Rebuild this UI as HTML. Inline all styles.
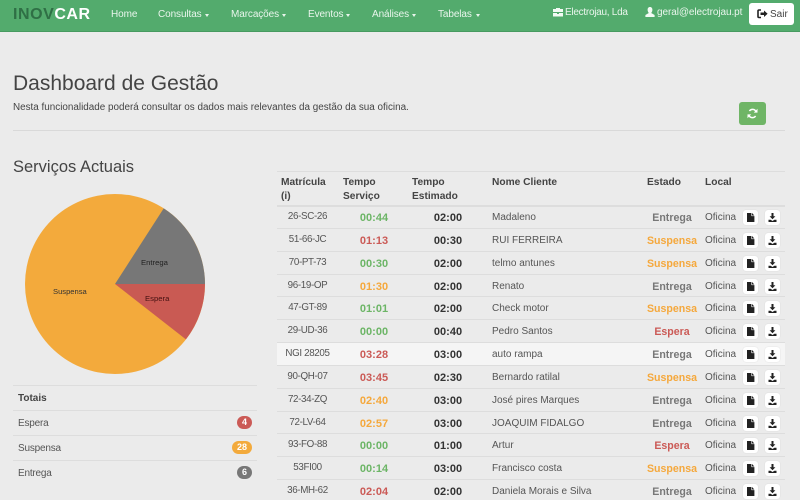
<!DOCTYPE html>
<html><head><meta charset="utf-8"><title>Dashboard de Gestão</title>
<style>
html,body{margin:0;padding:0;width:800px;height:500px;overflow:hidden;background:#ebebeb;font-family:"Liberation Sans",sans-serif;color:#555}
div,span,svg{position:absolute;white-space:nowrap}
b{font-weight:bold}
#w{left:0;top:0;width:800px;height:500px;overflow:hidden;background:#ebebeb}
#nav{left:0;top:0;width:800px;height:31px;background:#53ab6d;border-bottom:1px solid #479a60}
.n{top:8px;line-height:14px;font-size:10px;color:#e9f5ec;letter-spacing:-.1px}
.c{top:14px;width:0;height:0;border-left:2.5px solid transparent;border-right:2.5px solid transparent;border-top:3px solid #e9f5ec}
.h{font-size:10.2px;font-weight:bold;color:#444;line-height:14px}
.r{left:277px;width:508px;height:22px;border-top:1px solid #ddd}
.r span{top:5px;line-height:14px;font-size:10px;color:#555}
.r .m{left:0;width:61px;text-align:center;font-size:9.8px;letter-spacing:-.35px;top:4px}
.r .t{left:77px;width:40px;text-align:center;font-size:11px;font-weight:bold;top:5px}
.r .e{left:151px;width:40px;text-align:center;font-size:11px;font-weight:bold;color:#333;top:5px}
.r .p{left:215px}
.r .s{left:360px;width:70px;text-align:center;font-size:10.6px;font-weight:bold;top:5px}
.r .o{left:428px}
.r i{position:absolute;top:4px;width:15px;height:15px;background:#fff;border-radius:3px;box-shadow:0 0 1px #ccc}
.r i svg{left:3px;top:3px;width:9px;height:9px}
.a{left:466px}.b{left:488px}
.G{color:#6cb566!important}.R{color:#cb5a56!important}.O{color:#f5a83c!important}.Y{color:#777!important}
.l{left:13px;width:244px;height:1px;background:#ddd}
.tt{left:18px;font-size:10px;letter-spacing:-.2px;line-height:14px;color:#555}
.bd{height:13px;border-radius:7px;color:#fff;font-size:9px;font-weight:bold;line-height:13px;text-align:center}
</style></head><body>
<svg width="0" height="0" style="left:0;top:0">
<symbol id="f" viewBox="0 0 9 9"><path d="M1 0H5.4V3.1H8.4V9H1Z M6 0L8.4 2.5H6Z" fill="#222"/></symbol>
<symbol id="d" viewBox="0 0 9 9"><path d="M3.5 0H5.5V3.2H7.4L4.5 6.2 1.6 3.2H3.5Z M.5 6.8H2.6L4.5 8 6.4 6.8H8.5V9H.5Z" fill="#222"/></symbol>
</svg>
<div id="w">
<div id="nav"></div>
<div style="left:13px;top:5px;font-size:16px;line-height:20px;font-weight:bold;letter-spacing:.55px;color:#2f6f45">INOV<span style="position:static;color:#fff">CAR</span></div>
<div class="n" style="left:111px">Home</div>
<div class="n" style="left:158px">Consultas</div><div class="c" style="left:205px"></div>
<div class="n" style="left:231px">Marcações</div><div class="c" style="left:282px"></div>
<div class="n" style="left:308px">Eventos</div><div class="c" style="left:346px"></div>
<div class="n" style="left:372px">Análises</div><div class="c" style="left:412px"></div>
<div class="n" style="left:438px">Tabelas</div><div class="c" style="left:476px"></div>
<svg style="left:553px;top:7px" width="10" height="10" viewBox="0 0 10 10"><path d="M3 2V1H7V2H10V5H0V2Z M0 6H4V7H6V6H10V9.5H0Z" fill="#f2faf4"/></svg>
<div class="n" style="left:565px;top:6px;letter-spacing:-.27px">Electrojau, Lda</div>
<svg style="left:645px;top:7px" width="10" height="11" viewBox="0 0 10 11"><path d="M5 0C6.6 0 7.4 1.2 7.4 2.8 7.4 4.2 6.8 5.4 6.2 6L9.6 8V10H.4V8L3.8 6C3.2 5.4 2.6 4.2 2.6 2.8 2.6 1.2 3.4 0 5 0Z" fill="#f2faf4"/></svg>
<div class="n" style="left:657px;top:6px;letter-spacing:-.08px">geral@electrojau.pt</div>
<div style="left:749px;top:3px;width:45px;height:22px;background:#fff;border-radius:3px"></div>
<svg style="left:757px;top:9px" width="11" height="10" viewBox="0 0 11 10"><path d="M4 1H2A1 1 0 0 0 1 2V7.5A1 1 0 0 0 2 8.5H4" fill="none" stroke="#222" stroke-width="1.6"/><path d="M3.5 3.5H7V1.5L10.6 4.8 7 8V6H3.5Z" fill="#222"/></svg>
<div class="n" style="left:770px;top:8px;color:#444;letter-spacing:0">Sair</div>

<div style="left:13px;top:71px;font-size:21px;line-height:26px;color:#444">Dashboard de Gestão</div>
<div style="left:13px;top:101px;font-size:9.9px;line-height:14px;color:#444">Nesta funcionalidade poderá consultar os dados mais relevantes da gestão da sua oficina.</div>
<div style="left:739px;top:102px;width:27px;height:23px;background:#6fb566;border-radius:3px"></div>
<svg style="left:747px;top:108px" width="11" height="11" viewBox="0 0 11 11"><path d="M9 3.6A3.8 3.8 0 0 0 2.4 3M2 7.4A3.8 3.8 0 0 0 8.6 8" fill="none" stroke="#fff" stroke-width="1.5"/><path d="M10.5 .8V4.6H6.8Z M.5 10.2V6.4H4.2Z" fill="#fff"/></svg>
<div style="left:13px;top:130px;width:772px;height:1px;background:#d9d9d9"></div>

<div style="left:13px;top:157px;font-size:16.5px;line-height:20px;color:#444">Serviços Actuais</div>
<svg style="left:20px;top:190px" width="190" height="190" viewBox="-95 -94 190 190">
<circle cx="0" cy="0" r="90" fill="#f3aa3c"/>
<path d="M0 0L48.7-75.6A90 90 0 0 1 90 0Z" fill="#777"/>
<path d="M0 0L90 0A90 90 0 0 1 70.9 55.4Z" fill="#c95a53"/>
<text x="-62" y="10" font-family="Liberation Sans" font-size="7.6" fill="#333">Suspensa</text>
<text x="26" y="-19" font-family="Liberation Sans" font-size="7.7" fill="#222">Entrega</text>
<text x="30" y="17" font-family="Liberation Sans" font-size="7.7" fill="#411">Espera</text>
</svg>

<div class="l" style="top:385px"></div>
<div class="tt" style="top:392px;font-weight:bold;color:#444;letter-spacing:0">Totais</div>
<div class="l" style="top:410px"></div>
<div class="tt" style="top:417px">Espera</div>
<div class="bd" style="left:237px;top:416px;width:15px;background:#cb5a56">4</div>
<div class="l" style="top:435px"></div>
<div class="tt" style="top:442px">Suspensa</div>
<div class="bd" style="left:232px;top:441px;width:20px;background:#f3aa3c">28</div>
<div class="l" style="top:460px"></div>
<div class="tt" style="top:467px">Entrega</div>
<div class="bd" style="left:237px;top:466px;width:15px;background:#777">6</div>

<div style="left:277px;top:171px;width:508px;height:1px;background:#ddd"></div>
<div class="h" style="left:281px;top:176px">Matrícula<br>(i)</div>
<div class="h" style="left:343px;top:176px">Tempo<br>Serviço</div>
<div class="h" style="left:412px;top:176px">Tempo<br>Estimado</div>
<div class="h" style="left:492px;top:176px">Nome Cliente</div>
<div class="h" style="left:647px;top:176px">Estado</div>
<div class="h" style="left:705px;top:176px">Local</div>
<div style="left:277px;top:205px;width:508px;height:2px;background:#ddd"></div>

<div class="r" style="top:205px"><span class="m">26-SC-26</span><span class="t G">00:44</span><span class="e">02:00</span><span class="p">Madaleno</span><span class="s Y">Entrega</span><span class="o">Oficina</span><i class="a"><svg><use href="#f"/></svg></i><i class="b"><svg><use href="#d"/></svg></i></div>
<div class="r" style="top:228px"><span class="m">51-66-JC</span><span class="t R">01:13</span><span class="e">00:30</span><span class="p">RUI FERREIRA</span><span class="s O">Suspensa</span><span class="o">Oficina</span><i class="a"><svg><use href="#f"/></svg></i><i class="b"><svg><use href="#d"/></svg></i></div>
<div class="r" style="top:251px"><span class="m">70-PT-73</span><span class="t G">00:30</span><span class="e">02:00</span><span class="p">telmo antunes</span><span class="s O">Suspensa</span><span class="o">Oficina</span><i class="a"><svg><use href="#f"/></svg></i><i class="b"><svg><use href="#d"/></svg></i></div>
<div class="r" style="top:274px"><span class="m">96-19-OP</span><span class="t O">01:30</span><span class="e">02:00</span><span class="p">Renato</span><span class="s Y">Entrega</span><span class="o">Oficina</span><i class="a"><svg><use href="#f"/></svg></i><i class="b"><svg><use href="#d"/></svg></i></div>
<div class="r" style="top:296px"><span class="m">47-GT-89</span><span class="t G">01:01</span><span class="e">02:00</span><span class="p">Check motor</span><span class="s O">Suspensa</span><span class="o">Oficina</span><i class="a"><svg><use href="#f"/></svg></i><i class="b"><svg><use href="#d"/></svg></i></div>
<div class="r" style="top:319px"><span class="m">29-UD-36</span><span class="t G">00:00</span><span class="e">00:40</span><span class="p">Pedro Santos</span><span class="s R">Espera</span><span class="o">Oficina</span><i class="a"><svg><use href="#f"/></svg></i><i class="b"><svg><use href="#d"/></svg></i></div>
<div class="r" style="top:342px;background:#f5f5f5"><span class="m">NGI 28205</span><span class="t R">03:28</span><span class="e">03:00</span><span class="p">auto rampa</span><span class="s Y">Entrega</span><span class="o">Oficina</span><i class="a"><svg><use href="#f"/></svg></i><i class="b"><svg><use href="#d"/></svg></i></div>
<div class="r" style="top:365px"><span class="m">90-QH-07</span><span class="t R">03:45</span><span class="e">02:30</span><span class="p">Bernardo ratilal</span><span class="s O">Suspensa</span><span class="o">Oficina</span><i class="a"><svg><use href="#f"/></svg></i><i class="b"><svg><use href="#d"/></svg></i></div>
<div class="r" style="top:388px"><span class="m">72-34-ZQ</span><span class="t O">02:40</span><span class="e">03:00</span><span class="p">José pires Marques</span><span class="s Y">Entrega</span><span class="o">Oficina</span><i class="a"><svg><use href="#f"/></svg></i><i class="b"><svg><use href="#d"/></svg></i></div>
<div class="r" style="top:411px"><span class="m">72-LV-64</span><span class="t O">02:57</span><span class="e">03:00</span><span class="p">JOAQUIM FIDALGO</span><span class="s Y">Entrega</span><span class="o">Oficina</span><i class="a"><svg><use href="#f"/></svg></i><i class="b"><svg><use href="#d"/></svg></i></div>
<div class="r" style="top:433px"><span class="m">93-FO-88</span><span class="t G">00:00</span><span class="e">01:00</span><span class="p">Artur</span><span class="s R">Espera</span><span class="o">Oficina</span><i class="a"><svg><use href="#f"/></svg></i><i class="b"><svg><use href="#d"/></svg></i></div>
<div class="r" style="top:456px"><span class="m">53FI00</span><span class="t G">00:14</span><span class="e">03:00</span><span class="p">Francisco costa</span><span class="s O">Suspensa</span><span class="o">Oficina</span><i class="a"><svg><use href="#f"/></svg></i><i class="b"><svg><use href="#d"/></svg></i></div>
<div class="r" style="top:479px"><span class="m">36-MH-62</span><span class="t R">02:04</span><span class="e">02:00</span><span class="p">Daniela Morais e Silva</span><span class="s Y">Entrega</span><span class="o">Oficina</span><i class="a"><svg><use href="#f"/></svg></i><i class="b"><svg><use href="#d"/></svg></i></div>
</div>
</body></html>
